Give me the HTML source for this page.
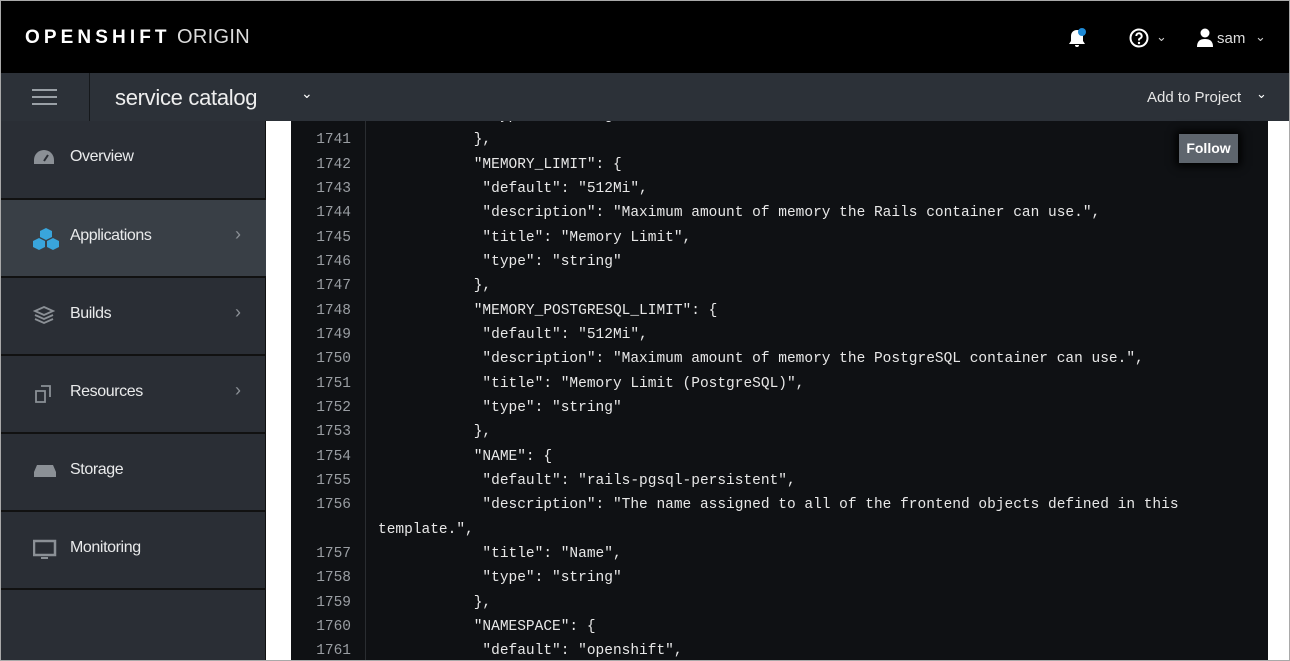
<!DOCTYPE html>
<html><head><style>
*{margin:0;padding:0;box-sizing:border-box}
body{width:1290px;height:661px;overflow:hidden;background:#fff;font-family:"Liberation Sans",sans-serif;position:relative}
.frame{position:absolute;inset:0;border:1px solid #a9a9a9;overflow:hidden}
.top{position:absolute;left:0;top:0;width:1288px;height:72px;background:#000;color:#fff}
.logo{position:absolute;left:24px;top:25px;font-size:19px;letter-spacing:4.1px;white-space:nowrap}
.logo span{letter-spacing:0.3px;font-weight:normal;color:#ddd;font-size:20px;margin-left:-3px}
.sub{position:absolute;left:0;top:72px;width:1288px;height:48px;background:#2c3138;color:#fff}
.ham{position:absolute;left:0;top:0;width:89px;height:48px;border-right:1px solid #15181b}
.ham i{position:absolute;left:31px;width:25px;height:2px;background:#9aa0a6}
.sc{position:absolute;left:114px;top:12px;font-size:22px;color:#eee;letter-spacing:-0.3px}
.side{position:absolute;left:0;top:120px;width:265px;height:541px;background:#2a2e35;border-right:1px solid #111}
.it{position:absolute;left:0;width:265px;height:78px;border-top:2px solid #111;color:#e9eaeb;font-size:16px;letter-spacing:-0.4px}
.it .t{position:absolute;left:69px;top:27px}
.it .c{position:absolute;left:234px;top:24px;color:#8b9096;font-size:18px}
.it svg{position:absolute;left:32px;top:27px}
.code{position:absolute;left:290px;top:120px;width:977px;height:541px;background:#0f1114;font-family:"Liberation Mono",monospace;font-size:14.5px;color:#e8e8e8;overflow:hidden}
.gut{position:absolute;left:0;top:0;width:75px;height:541px;border-right:1px solid #2a2d31}
.rows{position:absolute;left:0;top:-17px;width:977px}
.r{height:24.33px;line-height:24.33px;position:relative}
.r b{font-weight:normal;position:absolute;left:0;width:60px;text-align:right;color:#9a9ea3}
.r span{position:absolute;left:87px;white-space:pre}
.follow{position:absolute;left:1178px;top:133px;width:59px;height:29px;background:#5e656d;color:#fff;font-weight:bold;font-size:14px;text-align:center;line-height:29px;box-shadow:0 0 8px 3px #000}
</style></head><body><div class="frame">
<div class="top">
<div class="logo"><b>OPENSHIFT</b> <span>ORIGIN</span></div>
<svg style="position:absolute;left:1066px;top:27px" width="22" height="22" viewBox="0 0 22 22"><path d="M10 2c-4 0-6 3-6 6v5l-2 3h16l-2-3V8c0-3-2-6-6-6z" fill="#fff"/><path d="M8 17a2 2 0 0 0 4 0z" fill="#fff"/><circle cx="15" cy="4" r="4" fill="#1e8ad6"/></svg>
<svg style="position:absolute;left:1128px;top:27px" width="22" height="22" viewBox="0 0 22 22"><circle cx="10" cy="10" r="8.5" stroke="#fff" stroke-width="2" fill="none"/><path d="M7.3 8a2.7 2.7 0 1 1 3.7 2.5c-.7.3-1 .8-1 1.5v.5" stroke="#fff" stroke-width="2" fill="none"/><circle cx="10" cy="15" r="1.2" fill="#fff"/></svg>
<span style="position:absolute;left:1155px;top:28px;font-size:13px;color:#ccc">&#8964;</span>
<svg style="position:absolute;left:1195px;top:27px" width="18" height="20" viewBox="0 0 18 20"><circle cx="9" cy="5" r="4.5" fill="#fff"/><path d="M1 19c0-6 3-8 8-8s8 2 8 8z" fill="#fff"/></svg>
<span style="position:absolute;left:1216px;top:29px;font-size:15px;color:#ddd">sam</span>
<span style="position:absolute;left:1254px;top:28px;font-size:13px;color:#ccc">&#8964;</span>
</div>
<div class="sub">
<div class="ham"><i style="top:16px"></i><i style="top:23px"></i><i style="top:30px"></i></div>
<div class="sc">service catalog</div>
<span style="position:absolute;left:300px;top:12px;font-size:14px">&#8964;</span>
<span style="position:absolute;left:1146px;top:16px;font-size:15px;color:#e6e6e6">Add to Project</span>
<span style="position:absolute;left:1255px;top:13px;font-size:13px">&#8964;</span>
</div>
<div class="side">
<div class="it" style="top:-1px;border-top:none;height:79px"><svg width="22" height="20" viewBox="0 0 22 20"><path d="M11 3a10 10 0 0 0-10 10v4h20v-4A10 10 0 0 0 11 3z" fill="#8b9096"/><path d="M11 14l4-6" stroke="#2a2e35" stroke-width="2"/></svg><span class="t" style="top:28px">Overview</span></div>
<div class="it" style="top:77px;background:#393f46"><svg width="26" height="24" viewBox="0 0 26 24"><path d="M13 1l6 3v6l-6 3-6-3V4z M6 11l6 3v6l-6 3-6-3v-6z M20 11l6 3v6l-6 3-6-3v-6z" fill="#39a5dc"/></svg><span class="t">Applications</span><span class="c">&#8250;</span></div>
<div class="it" style="top:155px"><svg width="22" height="22" viewBox="0 0 22 22"><path d="M11 2l9 4-9 4-9-4z M2 10l9 4 9-4 M2 14l9 4 9-4" stroke="#8b9096" stroke-width="1.8" fill="none"/></svg><span class="t">Builds</span><span class="c">&#8250;</span></div>
<div class="it" style="top:233px"><svg width="22" height="22" viewBox="0 0 22 22"><path d="M3 8h9v11H3z M8 3h9v11" stroke="#8b9096" stroke-width="1.8" fill="none"/></svg><span class="t">Resources</span><span class="c">&#8250;</span></div>
<div class="it" style="top:311px"><svg width="24" height="20" viewBox="0 0 24 20"><path d="M4 4h16l3 7v5H1v-5z" fill="#8b9096"/></svg><span class="t">Storage</span></div>
<div class="it" style="top:389px"><svg width="24" height="22" viewBox="0 0 24 22"><rect x="1" y="2" width="21" height="14" stroke="#8b9096" stroke-width="2.5" fill="none"/><path d="M8 18h7v2H8z" fill="#8b9096"/></svg><span class="t">Monitoring</span></div>
<div class="it" style="top:467px;height:80px"></div>
</div>
<div class="code">
<div class="gut"></div>
<div class="rows">
<div class="r"><b>1740</b><span>            "type": "string"</span></div>
<div class="r"><b>1741</b><span>           },</span></div>
<div class="r"><b>1742</b><span>           "MEMORY_LIMIT": {</span></div>
<div class="r"><b>1743</b><span>            "default": "512Mi",</span></div>
<div class="r"><b>1744</b><span>            "description": "Maximum amount of memory the Rails container can use.",</span></div>
<div class="r"><b>1745</b><span>            "title": "Memory Limit",</span></div>
<div class="r"><b>1746</b><span>            "type": "string"</span></div>
<div class="r"><b>1747</b><span>           },</span></div>
<div class="r"><b>1748</b><span>           "MEMORY_POSTGRESQL_LIMIT": {</span></div>
<div class="r"><b>1749</b><span>            "default": "512Mi",</span></div>
<div class="r"><b>1750</b><span>            "description": "Maximum amount of memory the PostgreSQL container can use.",</span></div>
<div class="r"><b>1751</b><span>            "title": "Memory Limit (PostgreSQL)",</span></div>
<div class="r"><b>1752</b><span>            "type": "string"</span></div>
<div class="r"><b>1753</b><span>           },</span></div>
<div class="r"><b>1754</b><span>           "NAME": {</span></div>
<div class="r"><b>1755</b><span>            "default": "rails-pgsql-persistent",</span></div>
<div class="r"><b>1756</b><span>            "description": "The name assigned to all of the frontend objects defined in this</span></div>
<div class="r"><b></b><span>template.",</span></div>
<div class="r"><b>1757</b><span>            "title": "Name",</span></div>
<div class="r"><b>1758</b><span>            "type": "string"</span></div>
<div class="r"><b>1759</b><span>           },</span></div>
<div class="r"><b>1760</b><span>           "NAMESPACE": {</span></div>
<div class="r"><b>1761</b><span>            "default": "openshift",</span></div>
</div>
</div>
<div class="follow">Follow</div>
</div>
</body></html>
